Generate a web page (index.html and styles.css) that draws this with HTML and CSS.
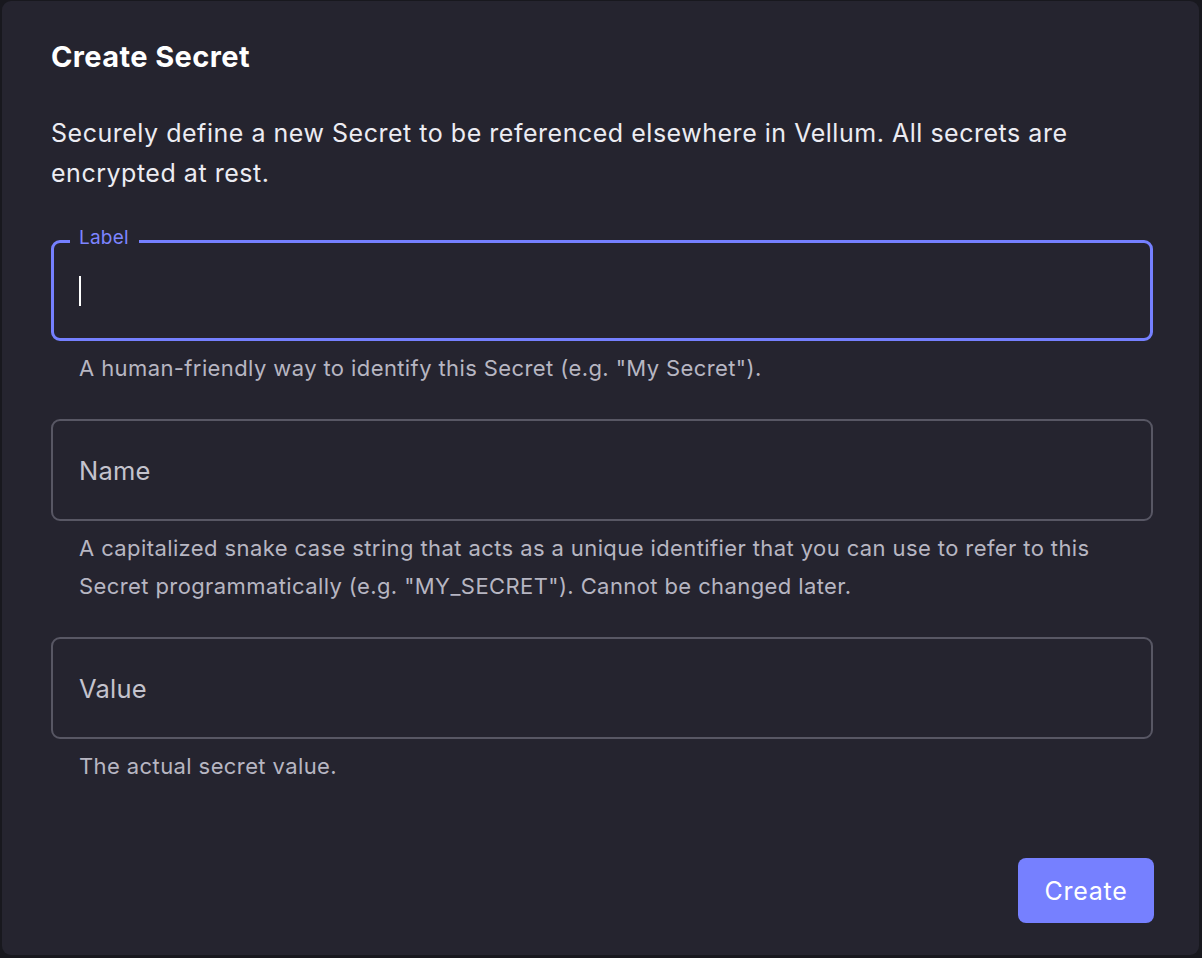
FILE: index.html
```html
<!DOCTYPE html>
<html>
<head>
<meta charset="utf-8">
<link rel="stylesheet" href="styles.css">
</head>
<body>
<div class="dialog">
  <h2 class="title">Create Secret</h2>
  <p class="desc">Securely define a new Secret to be referenced elsewhere in Vellum. All secrets are encrypted at rest.</p>
  <div class="field first">
    <div class="box focused">
      <span class="legend">Label</span>
      <span class="caret"></span>
    </div>
    <div class="help">A human-friendly way to identify this Secret (e.g. "My Secret").</div>
  </div>
  <div class="field">
    <div class="box"><span class="ph">Name</span></div>
    <div class="help">A capitalized snake case string that acts as a unique identifier that you can use to refer to this Secret programmatically (e.g. "MY_SECRET"). Cannot be changed later.</div>
  </div>
  <div class="field">
    <div class="box"><span class="ph">Value</span></div>
    <div class="help">The actual secret value.</div>
  </div>
  <div class="actions">
    <button class="btn">Create</button>
  </div>
</div>
</body>
</html>
```

FILE: styles.css
```css
html, body {
  margin: 0;
  padding: 0;
  background: #18181e;
  font-family: Inter, "Noto Sans", sans-serif;
}
body {
  padding: 1px 3px 3px 2px;
  height: 958px;
  box-sizing: border-box;
}
.dialog {
  background: #25242f;
  border-radius: 9px;
  height: 954px;
  box-sizing: border-box;
  padding: 38px 46px 0 49px;
  display: flex;
  flex-direction: column;
}
.title {
  margin: 0;
  font-size: 29px;
  font-weight: 700;
  letter-spacing: 0.4px;
  color: #ffffff;
  line-height: 36px;
}
.desc {
  margin: 38px 0 0 0;
  font-size: 25px;
  letter-spacing: 0.52px;
  line-height: 40px;
  color: #ececf2;
}
.field {
  display: flex;
  flex-direction: column;
}
.box {
  position: relative;
  height: 102px;
  border: 2px solid #585764;
  border-radius: 9px;
  box-sizing: border-box;
  display: flex;
  align-items: center;
  padding-left: 26px;
  margin-top: 32px;
}
.field.first .box { margin-top: 47px; }
.box.focused {
  border: 3px solid #7580ff;
  height: 101px;
  padding-left: 25px;
}
.legend {
  position: absolute;
  top: -17px;
  left: 16px;
  padding: 0 10px 0 9px;
  background: #25242f;
  color: #7d84ff;
  font-size: 19px;
  letter-spacing: 0.2px;
  line-height: 24px;
}
.caret {
  display: block;
  width: 2px;
  height: 30px;
  background: #ffffff;
  margin-left: 0;
}
.ph {
  font-size: 25.5px;
  letter-spacing: 0.25px;
  color: #c4c3cd;
}
.help {
  margin-top: 8px;
  padding-left: 28px;
  font-size: 22px;
  letter-spacing: 0.4px;
  line-height: 38px;
  color: #b7b6c2;
}
.actions {
  margin-top: auto;
  padding-bottom: 32px;
  display: flex;
  justify-content: flex-end;
}
.btn {
  width: 136px;
  height: 65px;
  border: none;
  border-radius: 8px;
  background: #7680ff;
  color: #ffffff;
  font-family: Inter, "Noto Sans", sans-serif;
  font-size: 25px;
  letter-spacing: 0.7px;
  margin-right: -1px;
}
```
